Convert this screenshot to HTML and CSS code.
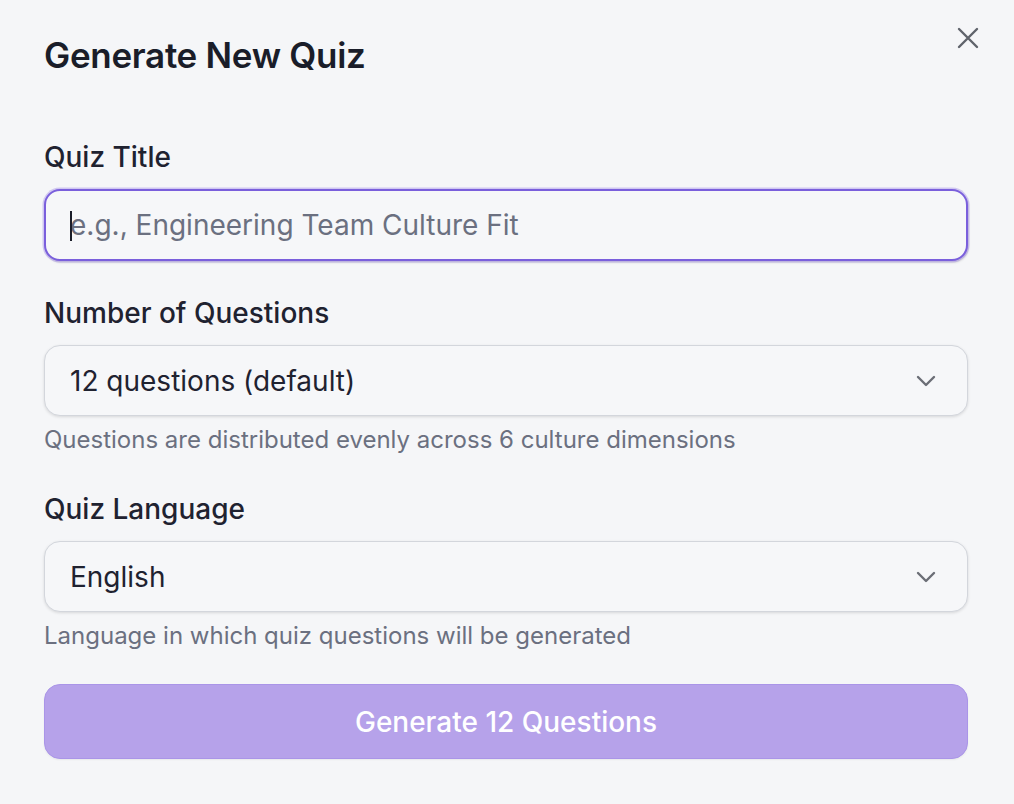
FILE: index.html
```html
<!DOCTYPE html>
<html lang="en">
<head>
<meta charset="utf-8">
<title>Generate New Quiz</title>
<link rel="stylesheet" href="styles.css">
</head>
<body>
<div class="dialog">
  <header class="dialog-header">
    <h1 class="dialog-title">Generate New Quiz</h1>
    <button class="close-btn" aria-label="Close">
      <svg width="24" height="24" viewBox="0 0 24 24" fill="none" stroke="currentColor" stroke-width="2.4" stroke-linecap="round"><path d="M3 3L21 21M21 3L3 21"/></svg>
    </button>
  </header>

  <div class="field field-first">
    <label class="field-label">Quiz Title</label>
    <div class="text-input focused">
      <span class="caret"></span>
      <span class="placeholder">e.g., Engineering Team Culture Fit</span>
    </div>
  </div>

  <div class="field">
    <label class="field-label">Number of Questions</label>
    <div class="select">
      <span class="select-value">12 questions (default)</span>
      <svg class="chevron" width="20" height="12" viewBox="0 0 20 12" fill="none" stroke="currentColor" stroke-width="2.4" stroke-linecap="round" stroke-linejoin="round"><path d="M2 2L10 10L18 2"/></svg>
    </div>
    <p class="help">Questions are distributed evenly across 6 culture dimensions</p>
  </div>

  <div class="field">
    <label class="field-label">Quiz Language</label>
    <div class="select">
      <span class="select-value">English</span>
      <svg class="chevron" width="20" height="12" viewBox="0 0 20 12" fill="none" stroke="currentColor" stroke-width="2.4" stroke-linecap="round" stroke-linejoin="round"><path d="M2 2L10 10L18 2"/></svg>
    </div>
    <p class="help">Language in which quiz questions will be generated</p>
  </div>

  <button class="submit-btn" disabled>Generate 12 Questions</button>
</div>
</body>
</html>
```

FILE: styles.css
```css
* { box-sizing: border-box; }
html, body {
  margin: 0;
  padding: 0;
  background: #f5f6f8;
}
body {
  font-family: Inter, "Noto Sans", "Liberation Sans", sans-serif;
  color: #1c1f2b;
  width: 1014px;
  height: 804px;
  overflow: hidden;
}
.dialog {
  display: flex;
  flex-direction: column;
  padding: 33px 46px 0 44px;
}
.dialog-header {
  position: relative;
}
.dialog-title {
  margin: 0;
  font-size: 35px;
  line-height: 44px;
  font-weight: 600;
  color: #1a1d29;
  letter-spacing: -0.3px;
}
.close-btn {
  position: absolute;
  top: -7px;
  right: -12px;
  width: 24px;
  height: 24px;
  padding: 0;
  border: 0;
  background: none;
  color: #5f636b;
  display: flex;
}
.field {
  display: flex;
  flex-direction: column;
  margin-top: 32px;
}
.field-first {
  margin-top: 60px;
}
.field-label {
  font-size: 28px;
  line-height: 40px;
  font-weight: 500;
  color: #1f2230;
  margin-bottom: 12px;
}
.text-input {
  position: relative;
  height: 72px;
  border-radius: 16px;
  background: #f6f7f9;
  display: flex;
  align-items: center;
  padding: 0 24px;
  font-size: 28px;
}
.text-input.focused {
  border: 2px solid #7a5fdc;
  box-shadow: 0 0 0 1.5px rgba(140, 112, 230, 0.35), 1px 2px 2px rgba(0, 0, 0, 0.12);
}
.caret {
  position: absolute;
  left: 24px;
  top: 20px;
  width: 2px;
  height: 30px;
  background: #1a1d29;
}
.placeholder {
  color: #6b7080;
}
.select {
  height: 71px;
  border: 1px solid #d3d6dc;
  border-radius: 16px;
  background: #f6f7f9;
  box-shadow: 0 1px 3px rgba(0, 0, 0, 0.12);
  display: flex;
  align-items: center;
  justify-content: space-between;
  padding: 0 31px 0 25px;
  font-size: 28px;
}
.select-value {
  color: #1f2230;
}
.chevron {
  color: #6b6e76;
}
.help {
  margin: 8px 0 1px 0;
  font-size: 24px;
  line-height: 32px;
  color: #6b7080;
}
.submit-btn {
  margin-top: 31px;
  height: 75px;
  border: 1px solid #aa95e8;
  border-radius: 16px;
  background: #b6a2ea;
  color: #ffffff;
  font-family: inherit;
  font-size: 28px;
  font-weight: 500;
  box-shadow: 0 1px 2px rgba(0, 0, 0, 0.06);
}
```
